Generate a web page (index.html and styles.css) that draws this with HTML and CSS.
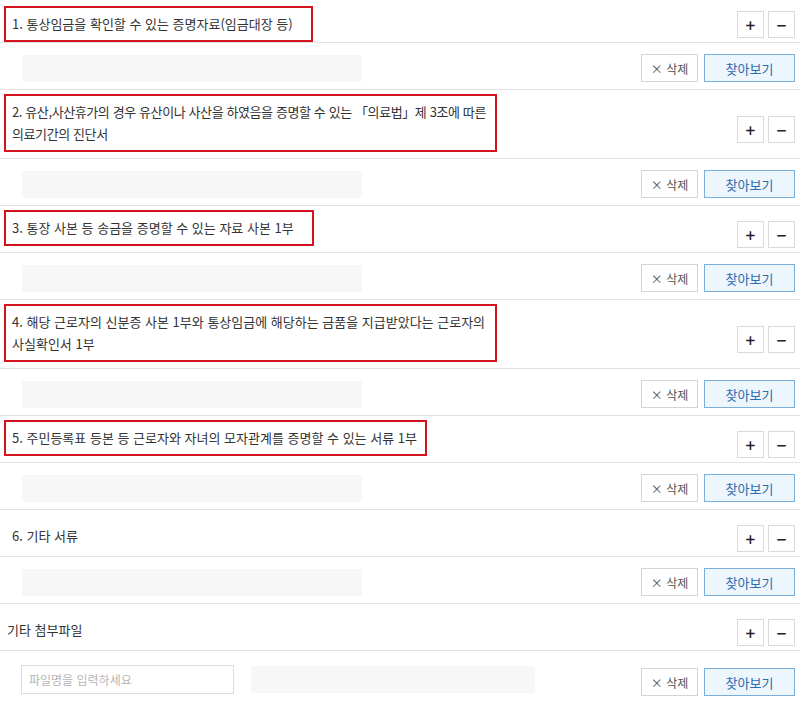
FILE: index.html
```html
<!DOCTYPE html>
<html lang="ko">
<head>
    <meta charset="UTF-8">
    <title>첨부서류</title>
    <link rel="stylesheet" href="styles.css">
</head>
<body>
    <div class="file-list">
        <div class="item item-first">
            <div class="item-head">
                <span class="item-title marked">1. 통상임금을 확인할 수 있는 증명자료(임금대장 등)</span>
                <div class="count-btns"><button class="count-btn">+</button><button class="count-btn">−</button></div>
            </div>
            <div class="item-file">
                <div class="file-name"></div>
                <div class="file-btns"><button class="btn-remove">× 삭제</button><button class="btn-find">찾아보기</button></div>
            </div>
        </div>

        <div class="item">
            <div class="item-head">
                <span class="item-title marked wide condensed">2. 유산,사산휴가의 경우 유산이나 사산을 하였음을 증명할 수 있는 「의료법」제 3조에 따른<br>의료기간의 진단서</span>
                <div class="count-btns"><button class="count-btn">+</button><button class="count-btn">−</button></div>
            </div>
            <div class="item-file">
                <div class="file-name"></div>
                <div class="file-btns"><button class="btn-remove">× 삭제</button><button class="btn-find">찾아보기</button></div>
            </div>
        </div>

        <div class="item">
            <div class="item-head">
                <span class="item-title marked">3. 통장 사본 등 송금을 증명할 수 있는 자료 사본 1부</span>
                <div class="count-btns"><button class="count-btn">+</button><button class="count-btn">−</button></div>
            </div>
            <div class="item-file">
                <div class="file-name"></div>
                <div class="file-btns"><button class="btn-remove">× 삭제</button><button class="btn-find">찾아보기</button></div>
            </div>
        </div>

        <div class="item">
            <div class="item-head">
                <span class="item-title marked wide">4. 해당 근로자의 신분증 사본 1부와 통상임금에 해당하는 금품을 지급받았다는 근로자의<br>사실확인서 1부</span>
                <div class="count-btns"><button class="count-btn">+</button><button class="count-btn">−</button></div>
            </div>
            <div class="item-file">
                <div class="file-name"></div>
                <div class="file-btns"><button class="btn-remove">× 삭제</button><button class="btn-find">찾아보기</button></div>
            </div>
        </div>

        <div class="item">
            <div class="item-head">
                <span class="item-title marked tight">5. 주민등록표 등본 등 근로자와 자녀의 모자관계를 증명할 수 있는 서류 1부</span>
                <div class="count-btns"><button class="count-btn">+</button><button class="count-btn">−</button></div>
            </div>
            <div class="item-file">
                <div class="file-name"></div>
                <div class="file-btns"><button class="btn-remove">× 삭제</button><button class="btn-find">찾아보기</button></div>
            </div>
        </div>

        <div class="item">
            <div class="item-head">
                <span class="item-title">6. 기타 서류</span>
                <div class="count-btns"><button class="count-btn">+</button><button class="count-btn">−</button></div>
            </div>
            <div class="item-file">
                <div class="file-name"></div>
                <div class="file-btns"><button class="btn-remove">× 삭제</button><button class="btn-find">찾아보기</button></div>
            </div>
        </div>

        <div class="item item-etc">
            <div class="item-head">
                <span class="item-title plain">기타 첨부파일</span>
                <div class="count-btns"><button class="count-btn">+</button><button class="count-btn">−</button></div>
            </div>
            <div class="item-file">
                <input type="text" class="file-label" placeholder="파일명을 입력하세요">
                <div class="file-name short"></div>
                <div class="file-btns"><button class="btn-remove">× 삭제</button><button class="btn-find">찾아보기</button></div>
            </div>
        </div>
    </div>
</body>
</html>
```

FILE: styles.css
```css
body {
    margin: 0;
    background-color: #fff;
    color: #333;
    font-family: "Noto Sans CJK KR", "Noto Sans", sans-serif;
    font-size: 13px;
}

.file-list {
    width: 800px;
}

.item-head {
    display: flex;
    align-items: center;
    justify-content: space-between;
    padding: 4px 5px 6px 4px;
    border-bottom: 1px solid #e3e3e3;
}

/* 첫 항목은 화면 위에서 잘려 있음 */
.item-first .item-head {
    padding-top: 6px;
    padding-bottom: 0;
}

.item-first .count-btns {
    margin-top: 1px;
    margin-bottom: 0;
}

.item-title {
    display: inline-block;
    box-sizing: border-box;
    margin: 4px 0 -4px;
    padding: 5px 18px 5px 6px;
    border: 2px solid transparent;
    line-height: 22px;
    white-space: nowrap;
}

.item-title.marked {
    margin: 0;
    border-color: #d3121c;
}

.item-title.wide {
    width: 493px;
    padding-right: 4px;
}

.item-title.condensed {
    letter-spacing: -0.4px;
}

.item-title.tight {
    padding-right: 8px;
}

.item-title.plain {
    padding-left: 1px;
}

.count-btns {
    display: flex;
    gap: 4px;
    margin-top: 11px;
    margin-bottom: -2px;
}

.count-btn {
    width: 27px;
    height: 27px;
    padding: 0;
    border: 1px solid #dadada;
    background-color: #fff;
    color: #222;
    font-family: "Noto Sans", sans-serif;
    font-size: 18px;
    font-weight: 500;
    line-height: 24px;
    cursor: pointer;
}

.item-file {
    display: flex;
    align-items: center;
    padding: 11px 5px 7px 22px;
    border-bottom: 1px solid #e3e3e3;
}

.file-name {
    width: 340px;
    height: 27px;
    border-radius: 2px;
    background-color: #f7f7f7;
}

.file-name.short {
    width: 284px;
}

.file-label {
    box-sizing: border-box;
    width: 213px;
    height: 29px;
    margin-right: 17px;
    padding: 0 7px;
    border: 1px solid #dcdcdc;
    font-family: "Noto Sans CJK KR", sans-serif;
    font-size: 12px;
    color: #333;
}

.file-label::placeholder {
    color: #b5b5b5;
}

.file-btns {
    display: flex;
    gap: 6px;
    margin-left: auto;
}

.btn-remove,
.btn-find {
    box-sizing: border-box;
    height: 28px;
    padding: 0;
    font-family: "Noto Sans CJK KR", sans-serif;
    cursor: pointer;
}

.btn-remove {
    width: 57px;
    border: 1px solid #d5d5d5;
    background-color: #fff;
    color: #555;
    font-size: 12px;
}

.btn-find {
    width: 91px;
    border: 1px solid #79aedb;
    background-color: #eef6fd;
    color: #2a6cb0;
    font-size: 13px;
}

.item-etc .item-file {
    padding-top: 11px;
    padding-left: 21px;
    border-bottom: none;
}

.item-etc .btn-remove,
.item-etc .btn-find {
    margin-top: 6px;
}
```
